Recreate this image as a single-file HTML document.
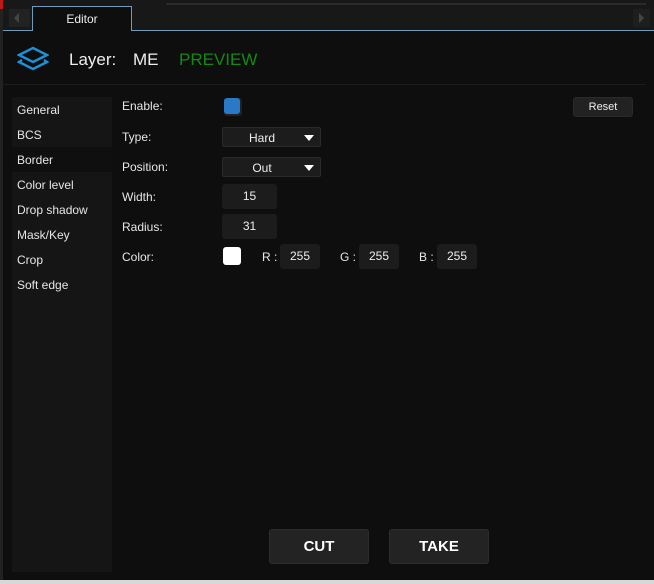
<!DOCTYPE html>
<html><head><style>
*{margin:0;padding:0;box-sizing:border-box}
body{width:654px;height:584px;background:#0e0e0e;font-family:"Liberation Sans",sans-serif;color:#e8e8e8;position:relative;overflow:hidden;font-size:12px}
.a{position:absolute}
.lbl{position:absolute;left:122px;font-size:12px;color:#e6e6e6}
.side{position:absolute;left:17px;font-size:12px;color:#e6e6e6}
.box{position:absolute;background:#1c1c1c;border-radius:3px;text-align:center;font-size:12px;color:#eee}
.dd{position:absolute;background:#1c1c1c;border:1px solid #2a2a2a;border-radius:2px;font-size:12px;color:#eee;height:20px;width:99px;left:222px}
.dd span{position:absolute;left:0;width:78px;text-align:center;top:3px}
.dd i{position:absolute;right:6px;top:7px;width:0;height:0;border-left:5px solid transparent;border-right:5px solid transparent;border-top:6px solid #fff}
.btn{position:absolute;top:529px;width:100px;height:35px;background:#232323;border:1px solid #2c2c2c;border-radius:3px;color:#fff;font-weight:bold;font-size:15px;text-align:center;line-height:33px}
</style></head><body>
<div class="a" style="left:0;top:0;width:654px;height:30px;background:#181818"></div>
<div class="a" style="left:0;top:0;width:3px;height:9px;background:#c01818"></div>
<div class="a" style="left:0;top:9px;width:3px;height:575px;background:#222"></div>
<div class="a" style="left:166px;top:3px;width:480px;height:2px;background:#2a2a2a"></div>
<div class="a" style="left:9px;top:9px;width:21px;height:18px;background:#222"></div>
<div class="a" style="left:14px;top:13px;width:0;height:0;border-top:5px solid transparent;border-bottom:5px solid transparent;border-right:5px solid #444"></div>
<div class="a" style="left:633px;top:9px;width:17px;height:18px;background:#1e1e1e"></div>
<div class="a" style="left:639px;top:13px;width:0;height:0;border-top:5px solid transparent;border-bottom:5px solid transparent;border-left:5px solid #444"></div>
<div class="a" style="left:3px;top:30px;width:651px;height:1px;background:#6f9cb8"></div>
<div class="a" style="left:32px;top:6px;width:100px;height:25px;background:#0e0e0e;border:1px solid #6f9cb8;border-bottom:none;text-align:center;line-height:24px;font-size:12px;color:#eee">Editor</div>
<svg class="a" style="left:17px;top:46px" width="32" height="26" viewBox="0 0 32 26"><path d="M16 2 L30 9 L16 16 L2 9 Z" fill="none" stroke="#1e90d8" stroke-width="2.4"/><path d="M5 14 L2 16 L16 23 L30 16 L27 14" fill="none" stroke="#1e90d8" stroke-width="2.4"/></svg>
<div class="a" style="left:69px;top:50px;font-size:17px;color:#eee">Layer:</div>
<div class="a" style="left:133px;top:50px;font-size:17px;color:#eee">ME</div>
<div class="a" style="left:179px;top:50px;font-size:17px;color:#138a13">PREVIEW</div>
<div class="a" style="left:3px;top:84px;width:643px;height:1px;background:#1d1d1d"></div>
<div class="a" style="left:12px;top:97px;width:100px;height:475px;background:#151515"></div>
<div class="a" style="left:12px;top:147px;width:100px;height:25px;background:#0f0f0f"></div>
<div class="side" style="top:103px">General</div>
<div class="side" style="top:128px">BCS</div>
<div class="side" style="top:153px">Border</div>
<div class="side" style="top:178px">Color level</div>
<div class="side" style="top:203px">Drop shadow</div>
<div class="side" style="top:228px">Mask/Key</div>
<div class="side" style="top:253px">Crop</div>
<div class="side" style="top:278px">Soft edge</div>
<div class="lbl" style="top:99px">Enable:</div>
<div class="lbl" style="top:130px">Type:</div>
<div class="lbl" style="top:160px">Position:</div>
<div class="lbl" style="top:190px">Width:</div>
<div class="lbl" style="top:220px">Radius:</div>
<div class="lbl" style="top:250px">Color:</div>
<div class="a" style="left:224px;top:98px;width:18px;height:18px;background:#222;border-radius:3px"></div>
<div class="a" style="left:224px;top:98px;width:16px;height:16px;background:#2a78c8;border-radius:3px"></div>
<div class="dd" style="top:127px"><span>Hard</span><i></i></div>
<div class="dd" style="top:157px"><span>Out</span><i></i></div>
<div class="box" style="left:222px;top:184px;width:55px;height:25px;line-height:25px">15</div>
<div class="box" style="left:222px;top:214px;width:55px;height:25px;line-height:25px">31</div>
<div class="a" style="left:223px;top:247px;width:18px;height:18px;background:#fff;border-radius:3px"></div>
<div class="a" style="left:262px;top:250px">R :</div>
<div class="box" style="left:280px;top:244px;width:40px;height:25px;line-height:25px">255</div>
<div class="a" style="left:340px;top:250px">G :</div>
<div class="box" style="left:359px;top:244px;width:40px;height:25px;line-height:25px">255</div>
<div class="a" style="left:419px;top:250px">B :</div>
<div class="box" style="left:437px;top:244px;width:40px;height:25px;line-height:25px">255</div>
<div class="a" style="left:573px;top:97px;width:60px;height:20px;background:#222;border:1px solid #2a2a2a;border-radius:3px;text-align:center;line-height:18px;font-size:11px;color:#eee">Reset</div>
<div class="btn" style="left:269px">CUT</div>
<div class="btn" style="left:389px">TAKE</div>
<div class="a" style="left:0;top:580px;width:654px;height:4px;background:#d8d8d8"></div>
</body></html>
